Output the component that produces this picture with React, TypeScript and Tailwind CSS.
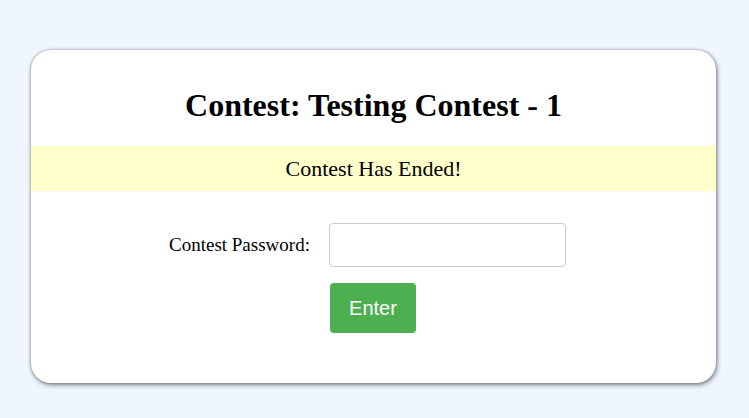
export default function App() {
  return (
    <div className="min-h-[418px] w-full bg-[#f0f6ff] pt-[50px]" style={{ fontFamily: '"Liberation Serif", "Times New Roman", serif' }}>
      <div className="ml-[31px] w-[685px] h-[333px] rounded-[20px] bg-white shadow-[1px_2px_5px_rgba(0,0,0,0.45),0_0_3px_rgba(0,0,0,0.3)] overflow-hidden">
        <div className="h-[96px] flex items-end justify-center pb-[25px]">
          <h1 className="text-[32px] font-bold leading-none text-black">Contest: Testing Contest - 1</h1>
        </div>
        <div className="h-[45px] bg-[#ffffcc] flex items-center justify-center text-[22px] text-black">
          Contest Has Ended!
        </div>
        <div className="mt-[32px] flex flex-col">
          <div className="flex items-center pl-[138px]">
            <label className="text-[19px] text-black mr-[19px] whitespace-nowrap">Contest Password:</label>
            <input type="password" className="w-[237px] h-[44px] border border-[#cccccc] rounded-[4px] bg-white px-2 outline-none" />
          </div>
          <div className="flex mt-[16px] pl-[299px]">
            <button className="w-[86px] h-[50px] rounded-[4px] bg-[#4caf50] text-white text-[20px]" style={{ fontFamily: '"Liberation Sans", Arial, sans-serif' }}>
              Enter
            </button>
          </div>
        </div>
      </div>
    </div>
  );
}
